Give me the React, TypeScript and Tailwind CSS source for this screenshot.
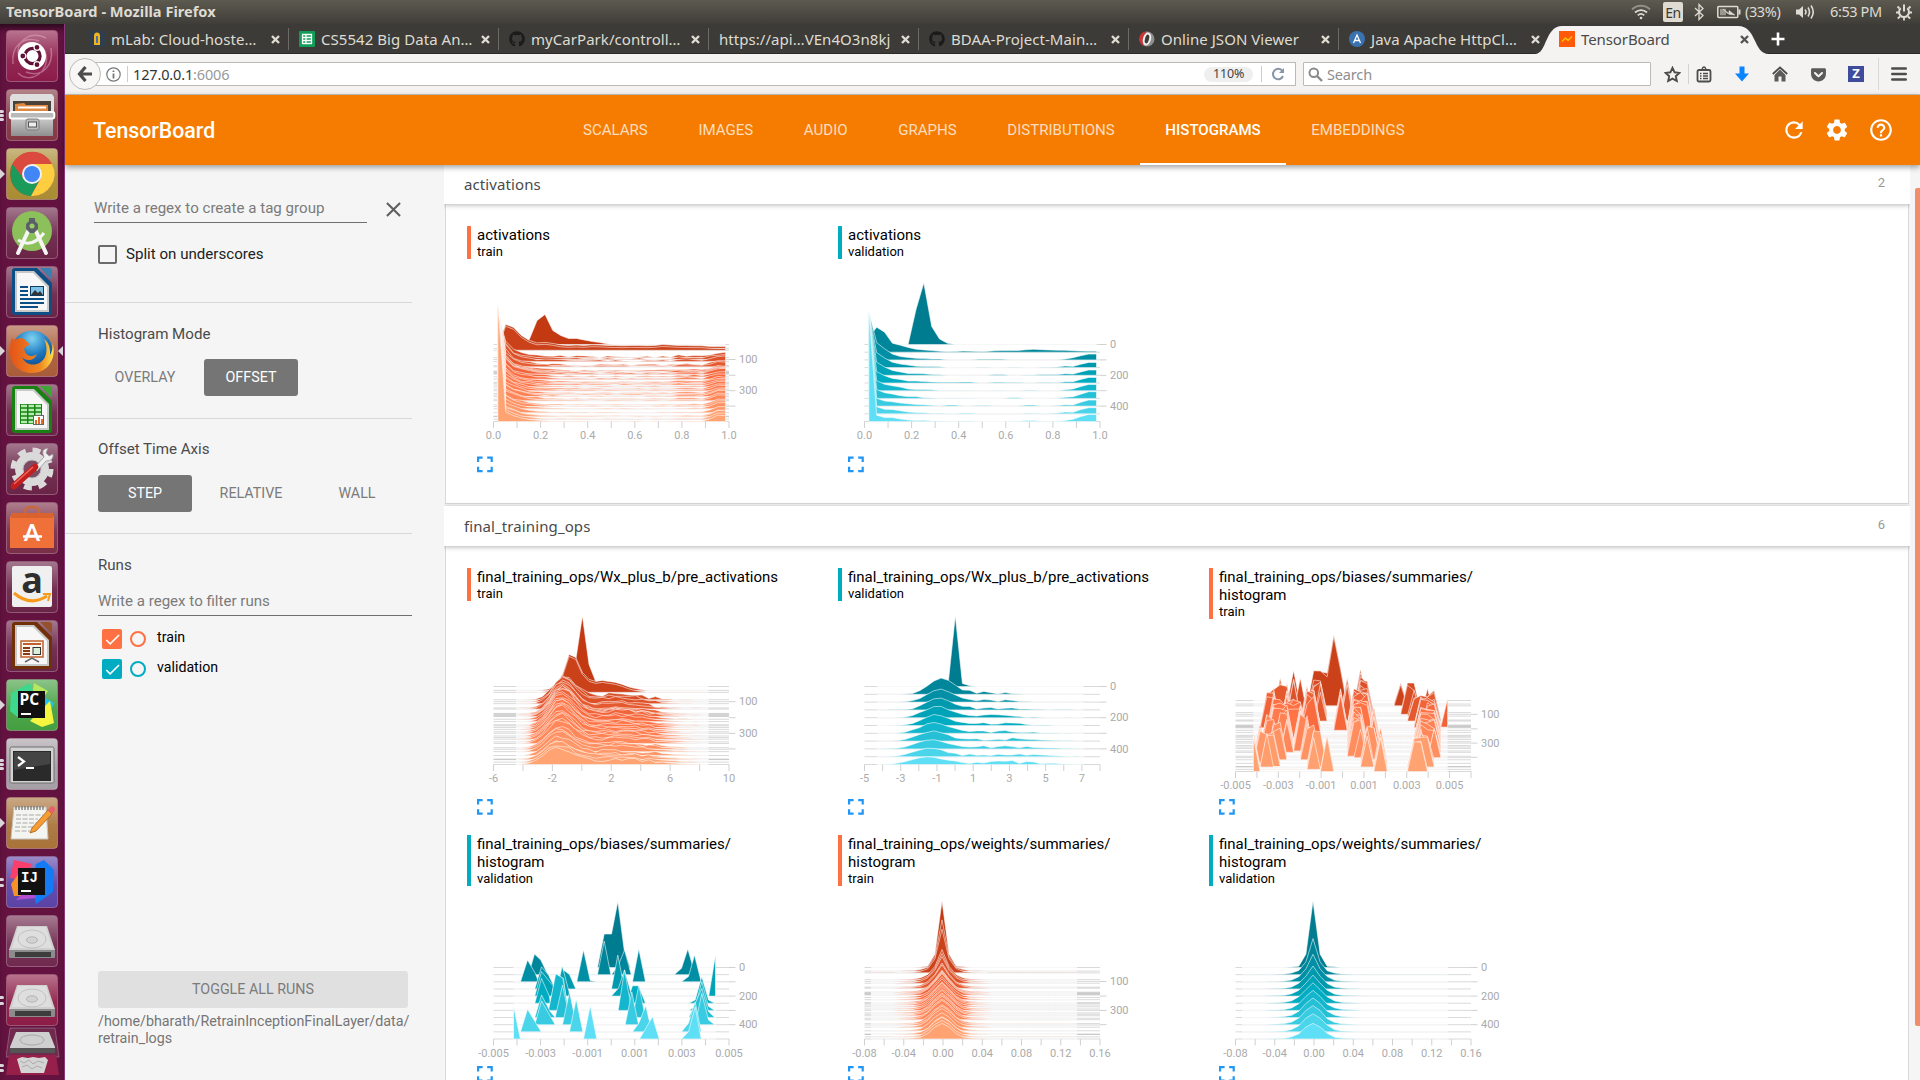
import React from "react";
import { MdRefresh, MdSettings, MdHelpOutline, MdClose, MdCheck } from "react-icons/md";
import { FaGithub, FaGetPocket } from "react-icons/fa";

const UBUNTU = "font-['Noto_Sans',sans-serif]";

/* ---------- chart helpers ---------- */

type Pt = [number, number];
type Ridge = { t: number; pts: Pt[] };

const LEFT = 26.5;
const WIDTH = 235.5;

const TRAIN_STEPS = [
  0, 0.05, 0.075, 0.17, 0.195, 0.22, 0.275, 0.29, 0.345, 0.355, 0.365, 0.375, 0.385, 0.42, 0.45, 0.49, 0.505, 0.525, 0.55,
  0.58, 0.6, 0.635, 0.655, 0.675, 0.71, 0.73, 0.785, 0.805, 0.835, 0.885, 0.93, 0.937, 0.97, 1,
];
const VAL_STEPS = [0, 0.1, 0.2, 0.3, 0.4, 0.5, 0.6, 0.7, 0.8, 0.9, 1];

const TRAIN_RAMP = [
  [194, 57, 18],
  [255, 112, 67],
  [255, 163, 115],
];
const VAL_RAMP = [
  [0, 124, 145],
  [0, 172, 193],
  [94, 223, 246],
];

function ramp(stops: number[][], t: number) {
  const k = t < 0.5 ? 0 : 1;
  const f = (t - k * 0.5) * 2;
  const c = stops[k].map((v, i) => Math.round(v + (stops[k + 1][i] - v) * f));
  return `rgb(${c[0]},${c[1]},${c[2]})`;
}

function noise(a: number, b: number) {
  const s = Math.sin(a * 127.1 + b * 311.7) * 43758.5453;
  return s - Math.floor(s);
}

function lerpTable(table: Pt[], t: number) {
  if (t <= table[0][0]) return table[0][1];
  for (let i = 1; i < table.length; i++) {
    if (t <= table[i][0]) {
      const [a, va] = table[i - 1];
      const [b, vb] = table[i];
      return va + ((vb - va) * (t - a)) / (b - a);
    }
  }
  return table[table.length - 1][1];
}

function bins(lo: number, hi: number, heights: number[]): Pt[] {
  return heights.map((h, i) => [lo + ((hi - lo) * i) / (heights.length - 1), Math.max(0, h)] as Pt);
}

const range30 = Array.from({ length: 30 }, (_, i) => i);
const gauss = (x: number, c: number, s: number) => Math.exp(-((x - c) * (x - c)) / (2 * s * s));

const activationsTrain: Ridge[] = TRAIN_STEPS.map((t, r) => {
  let h: number[];
  if (r === 0) {
    h = range30.map((i) => [0, 0, 0, 0, 5, 24, 30, 14, 9, 6, 6, 4.5, 3, 2, 0.6][i] ?? 0);
  } else if (r < 3) {
    h = range30.map((i) => [3, 24, 21, 13, 8, 5.5, 6, 5, 3.5, 3, 3.3, 3, 3.6, 3.4, 3, 2.8, 2.6, 3, 2.8, 2.6, 3, 3.8, 3.4, 3, 2.8, 2.6, 2.6, 2][i] ?? 1.8);
  } else {
    const first = lerpTable([[0.17, 42], [0.4, 74], [0.7, 94], [1, 117]], t);
    h = range30.map((i) => {
      if (i === 0) return first;
      if (i === 1) return 17 - 10 * t + noise(r, 4) * 3;
      const tail = 8 * Math.exp(-(i - 1.5) / (2.6 - t));
      const mid = 1.9 * (1 - t * 0.75) * noise(r, i);
      const edge = i > 25 ? (i === 26 ? 0.4 : i === 27 ? 2.2 : 3.6 + 2.4 * t) : i > 22 ? 1.1 * (1 - t) + 0.3 : 0;
      return tail * (0.8 + 0.4 * noise(i, r)) + mid + edge;
    });
  }
  return { t, pts: bins(30.9, 258.5, h) };
});

const activationsVal: Ridge[] = VAL_STEPS.map((t, r) => {
  let h: number[];
  if (r === 0) h = range30.map((i) => [0, 0, 0, 0, 0, 0, 35, 61.5, 18, 5.5, 1.2][i] ?? 0);
  else if (r === 1)
    h = range30.map((i) => [15, 25, 20, 9, 7, 4.8, 3, 2.3, 1.6, 1, 0.5, 0.6, 1.2, 1, 0.6, 0.8, 1.4, 1.6, 1.6, 1.8, 2.4, 2.9, 2.5, 2.2, 2, 1.9, 1.5, 1.1][i] ?? 1);
  else {
    const first = lerpTable([[0.2, 48], [0.5, 72], [1, 110]], t);
    h = range30.map((i) => {
      if (i === 0) return first;
      if (i === 1) return 21 * Math.exp(-t * 1.6) + 2;
      if (i === 2) return 13 * Math.exp(-t * 1.8) + 2;
      if (i < 9) return Math.max(0, (5.8 - t * 2) * Math.exp(-(i - 3) / 2.4) + noise(r, i) * 0.9 - 0.3);
      const edge = i === 25 ? 0.9 : i === 26 ? 1.2 : i === 27 ? 3 + t : i > 27 ? 4.7 + 1.6 * t : 0;
      return Math.max(0, noise(r * 3, Math.floor(i / 2)) * 1.6 - 0.5) + edge;
    });
  }
  return { t, pts: bins(30.9, 258.5, h) };
});

const preActTrain: Ridge[] = TRAIN_STEPS.map((t, r) => {
  let h: number[];
  if (r === 0) h = range30.map((i) => [0, 0, 0, 0, 0, 0, 0, 0, 3, 26, 70.5, 22, 5, 1.5][i] ?? 0);
  else if (r < 3)
    h = range30.map((i) => [0, 0, 0, 0, 0.4, 1.5, 6, 16, 36, 33, 18, 11, 9, 10, 9, 8, 6, 3.5, 1.8, 0.7][i] ?? 0);
  else {
    const peak = lerpTable([[0.17, 23], [0.3, 28], [0.6, 27], [0.8, 20], [1, 16]], t);
    const c = 7.3 - t * 1.1;
    h = range30.map((i) => {
      if (i === 0 || i > 27) return 0;
      const main = peak * gauss(i, c, i < c ? 1.5 + 0.4 * t : 1.9 + 0.3 * t);
      const side = (6.6 - t * 1.6) * gauss(i, 15.6, 3 + 2 * t);
      const n = (noise(r, i) - 0.5) * (i > 4 && i < 22 ? 3 : 0.4);
      return main + side + n;
    });
  }
  return { t, pts: bins(49, 241.5, h) };
});

const preActVal: Ridge[] = VAL_STEPS.map((t, r) => {
  let h: number[];
  if (r === 0) h = range30.map((i) => [0, 0, 0, 0, 0, 0, 0, 0, 0, 0, 3, 70.5, 3, 0.8][i] ?? 0);
  else {
    const peak = lerpTable([[0.1, 15.5], [0.2, 12.5], [0.4, 11], [0.6, 10], [1, 8]], t);
    const c = 9.2 - t * 2;
    h = range30.map((i) => {
      if (i === 0 || i === 29) return 0;
      const main = peak * gauss(i, c, i < c ? 1.6 + t * 0.6 : 1.8 + 0.4 * t);
      const side = 2.6 * gauss(i, 14.5 + 4 * t, 2.2 + t * 3.2) * (0.4 + noise(r, i * 2));
      return main + side + (noise(i, r) - 0.5) * (i > 4 && i < 20 ? 1.1 : 0.3);
    });
  }
  return { t, pts: bins(39, 245.5, h) };
});

const BIAS_TRACKS: Pt[][] = [
  [[0.05, 6], [0.35, 2], [0.5, 3.2], [1, 0]],
  [[0.17, 7], [0.35, 3], [0.6, 4], [0.95, 2]],
  [[0.05, 10], [0.25, 5], [0.7, 5], [0.93, 3]],
  [[0, 11], [0.3, 8], [0.6, 7], [0.98, 9]],
  [[0, 12], [0.2, 10], [0.45, 9]],
  [[0.45, 6], [0.8, 8], [1, 11]],
  [[0.05, 13], [0.2, 14], [0.43, 13]],
  [[0.17, 14], [0.5, 15], [0.8, 15]],
  [[0.05, 16], [0.4, 16], [0.7, 16], [0.95, 17]],
  [[0.17, 17], [0.5, 17.4], [1, 19]],
  [[0.05, 22], [0.2, 23.4], [0.4, 25.6], [0.8, 25], [1, 24]],
  [[0.17, 24], [0.4, 25.6], [1, 24.6]],
  [[0.2, 26], [0.5, 25.6], [0.8, 26.6], [0.95, 26]],
  [[0.27, 27], [0.5, 27.4], [0.8, 27]],
  [[0.3, 28], [0.38, 29]],
];

const biasTrain: Ridge[] = TRAIN_STEPS.map((t, r) => {
  const h = range30.map(() => 0);
  if (r === 0) {
    h[12] = 50;
  } else {
    BIAS_TRACKS.forEach((track, k) => {
      if (t < track[0][0] - 0.001 || t > track[track.length - 1][0] + 0.001) return;
      const b = Math.round(lerpTable(track, t));
      const v = (k > 9 ? 21 : 28) + noise(r, k) * 9;
      h[b] = Math.max(h[b], v);
    });
    if (r < 3) {
      h[12] = 69;
      h[13] = 36;
      h[22] = 21;
    }
  }
  return { t, pts: bins(44.4, 238.6, h) };
});

/* Each ridge lists [x, height] pairs in thirds of a pixel. */
const BIAS_VAL: Pt[][] = [
  [[312, 0], [332, 96], [354, 96], [373, 193], [392, 48], [410, 0]],
  [[105, 0], [123, 57], [142, 39], [163, 0], [312, 0], [332, 96], [352, 0], [354, 0], [373, 24], [393, 69], [413, 0], [543, 0], [564, 19], [583, 72], [605, 0]],
  [[81, 0], [102, 61], [125, 26], [135, 0], [250, 0], [270, 91], [290, 4], [310, 0], [417, 0], [436, 94], [456, 0], [564, 0], [585, 16], [603, 76], [623, 0]],
  [[124, 0], [144, 62], [165, 37], [185, 0], [195, 0], [210, 52], [228, 39], [247, 0], [354, 0], [373, 97], [393, 0]],
  [[124, 0], [144, 69], [180, 29], [184, 0], [187, 0], [206, 86], [230, 0], [354, 0], [375, 24], [393, 74], [415, 0], [646, 0], [666, 119], [666, 0]],
  [[124, 0], [144, 70], [168, 20], [170, 0], [187, 83], [210, 70], [220, 0], [400, 0], [417, 48], [435, 48], [456, 0], [586, 0], [605, 10], [625, 75], [645, 10], [664, 0]],
  [[165, 0], [187, 105], [208, 92], [225, 0], [374, 0], [393, 117], [415, 0], [586, 0], [605, 12], [625, 82], [645, 12], [664, 0]],
  [[124, 0], [144, 63], [170, 18], [185, 0], [207, 93], [228, 0], [417, 0], [436, 93], [456, 0], [586, 0], [625, 83], [645, 18], [664, 0]],
  [[124, 0], [144, 67], [185, 0], [207, 0], [228, 94], [248, 0], [395, 0], [415, 94], [435, 0], [605, 0], [625, 89], [645, 14], [664, 0]],
  [[81, 0], [102, 63], [143, 0], [228, 0], [248, 94], [268, 0], [417, 0], [436, 26], [457, 74], [475, 0], [564, 0], [585, 26], [605, 86], [623, 0]],
  [[60, 0], [60, 95], [80, 2], [102, 0], [270, 0], [290, 95], [310, 0], [438, 0], [477, 62], [497, 0], [564, 0], [585, 22], [605, 92], [623, 0]],
];
const biasVal: Ridge[] = VAL_STEPS.map((t, r) => ({
  t,
  pts: [[46.5, 0] as Pt, ...BIAS_VAL[r].map(([x, h]) => [LEFT + x / 3, h > 30 ? h / 3 + 1.5 : h / 3] as Pt), [248.7, 0] as Pt],
}));

const PEAKS: Pt[] = [[0, 66.5], [0.1, 36], [0.2, 27.5], [0.3, 23], [0.4, 21], [0.6, 20], [0.8, 19], [0.9, 18], [1, 15.6]];
function weightRidges(steps: number[]): Ridge[] {
  return steps.map((t, r) => {
    const p = lerpTable(PEAKS, t);
    const e = 1 - Math.exp(-t * 3);
    const ratio = [1, 0.2 + 0.6 * e, 0.02 + 0.36 * e, 0.01 + 0.13 * e, 0.06 * e, 0.035 * e, 0.02 * e];
    const h = range30.map((i) => {
      const d = Math.abs(i - 10);
      const v = d < 7 ? p * ratio[d] : 0;
      const jitter = d > 1 ? 1 + (noise(r, i) - 0.5) * 0.2 : 1;
      return v * jitter;
    });
    return { t, pts: bins(33, 239, h) };
  });
}
const weightsTrain = weightRidges(TRAIN_STEPS);
const weightsVal = weightRidges(VAL_STEPS);

type ChartProps = {
  run: "train" | "validation";
  ridges: Ridge[];
  top: number;
  base: [number, number];
  height: number;
  ticks: number;
  labels: [number, string][];
  iconY: number;
};

function Chart({ run, ridges, top, base, height, ticks, labels, iconY }: ChartProps) {
  const [b0, b1] = base;
  const stops = run === "train" ? TRAIN_RAMP : VAL_RAMP;
  const y = (t: number) => b0 + (b1 - b0) * t;
  const right = LEFT + WIDTH;
  const marks = run === "train" ? [0.195, 0.4, 0.6, 0.8] : [0, 0.2, 0.4, 0.6, 0.8];
  const markText = run === "train" ? ["100", "", "300", ""] : ["0", "", "200", "", "400"];
  return (
    <svg
      className="block shrink-0 font-['Roboto',sans-serif]"
      width={371}
      height={height}
      viewBox={`0 ${top} 371 ${height}`}
      fontSize={11}
      fill="#aaaaaa"
    >
      <g stroke="#000" strokeWidth={1}>
        {ridges.map((r, i) => (
          <line key={i} x1={LEFT} x2={right} y1={y(r.t)} y2={y(r.t)} strokeOpacity={0.15} />
        ))}
      </g>
      {ridges.map((r, i) => (
        <path
          key={i}
          d={
            `M${r.pts[0][0]},${y(r.t)}` +
            r.pts.map(([x, h]) => `L${x.toFixed(1)},${(y(r.t) - h).toFixed(1)}`).join("") +
            `L${r.pts[r.pts.length - 1][0]},${y(r.t)}Z`
          }
          fill={ramp(stops, r.t)}
          stroke="#fff"
          strokeWidth={1}
          strokeOpacity={0.55}
        />
      ))}
      <g stroke="#d0d0d0" strokeWidth={1}>
        {Array.from({ length: ticks + 1 }, (_, i) => (
          <line key={i} x1={LEFT + (WIDTH * i) / ticks} x2={LEFT + (WIDTH * i) / ticks} y1={b1} y2={b1 + 6.5} />
        ))}
        {marks.map((m) => (
          <line key={m} x1={right} x2={right + 6.5} y1={y(m)} y2={y(m)} />
        ))}
      </g>
      {labels.map(([pos, text]) => (
        <text key={text} x={LEFT + WIDTH * pos} y={b1 + 17.5} textAnchor="middle">
          {text}
        </text>
      ))}
      {marks.map((m, i) => (
        <text key={m} x={right + 10} y={y(m) + 3.7}>
          {markText[i]}
        </text>
      ))}
      <g transform={`translate(10 ${iconY})`} fill="none" stroke="#2196f3" strokeWidth={2.2}>
        <path d="M1.1,5.6V1.1H5.6M10.2,1.1H14.7V5.6M14.7,10.2V14.7H10.2M5.6,14.7H1.1V10.2" />
      </g>
    </svg>
  );
}

function Card({ title, ...chart }: ChartProps & { title: string[] }) {
  const bar = chart.run === "train" ? "border-[#ff7043]" : "border-[#00acc1]";
  return (
    <div className="flex w-[371px] shrink-0 flex-col">
      <div className={`shrink-0 border-l-4 pl-1.5 text-black ${bar}`}>
        {title.map((line) => (
          <div key={line} className="h-[18px] whitespace-nowrap text-[15px] leading-[18px]">
            {line}
          </div>
        ))}
        <div className="h-[15px] text-[13px] leading-[15px]">{chart.run}</div>
      </div>
      <Chart {...chart} />
    </div>
  );
}

/* ---------- desktop top bar ---------- */

function TitleBar() {
  return (
    <div className={`flex h-6 shrink-0 items-center justify-between bg-linear-to-b from-[#5d5b50] to-[#3f3d38] pl-1.5 text-[#dfdbd2] ${UBUNTU}`}>
      <span className="text-[14.600px] font-bold">TensorBoard - Mozilla Firefox</span>
      <div className="flex items-center text-[14.5px] tracking-[-0.4px]">
        <svg className="mr-3" width="20" height="18" viewBox="0 0 20 18" fill="none" stroke="#dfdbd2" strokeWidth="1.8">
          <path d="M1,6.5C6,1.5 14,1.5 19,6.5" strokeOpacity=".45" />
          <path d="M4,9.5C7.500,6.200 12.500,6.200 16,9.500" />
          <path d="M6.800,12.300C8.700,10.600 11.300,10.600 13.200,12.300" />
          <circle cx="10" cy="15" r="1.3" fill="#dfdbd2" stroke="none" />
        </svg>
        <span className="mr-[10px] flex h-5 w-5 items-center justify-center rounded-[2px] bg-[#dfdbd2] text-[14px] text-[#3c3b37]">En</span>
        <svg className="mr-3" width="12" height="18" viewBox="0 0 12 18" fill="none" stroke="#dfdbd2" strokeWidth="1.3">
          <path d="M2,5L10,12.500L6,16.500V1.500L10,5.500L2,13" />
        </svg>
        <svg className="mr-1" width="24" height="14" viewBox="0 0 24 14" fill="none" stroke="#dfdbd2">
          <rect x=".8" y="1.500" width="20" height="11" rx="1" strokeWidth="1.500" />
          <path d="M22.500,4.500V9.500" strokeWidth="2" />
          <rect x="3" y="3.800" width="6" height="6.500" fill="#9b978d" stroke="none" />
          <path d="M6,4L12,8.500V5.500L18,10L12.500,9.500L10,8Z" fill="#dfdbd2" strokeWidth=".5" />
        </svg>
        <span className="w-[50px]">(33%)</span>
        <svg className="mr-[14px]" width="21" height="16" viewBox="0 0 21 16" fill="none" stroke="#dfdbd2" strokeWidth="1.600">
          <path d="M1,5.500H4L8,2V14L4,10.500H1Z" fill="#dfdbd2" stroke="none" />
          <path d="M10,5.500Q12,8 10,10.500M13,3.500Q16,8 13,12.500M16,1.500Q20.500,8 16,14.500" />
        </svg>
        <span className="w-[66px]">6:53 PM</span>
        <svg className="mr-2" width="16" height="18" viewBox="0 0 16 18" fill="none" stroke="#dfdbd2" strokeWidth="2">
          <path d="M4.800,5.200A5,5 0 1 0 11.200,5.200M8,1.500V8.500" />
          <path d="M1.500,3.500L3.500,5.500M14.500,3.500L12.500,5.500M0,9.500H3M13,9.500H16M1.800,15.500L4,13.500M14.200,15.500L12,13.500M8,14.500V17.500" strokeWidth="1.800" />
        </svg>
      </div>
    </div>
  );
}

/* ---------- launcher ---------- */

function Tile({ bg, pips, active, children }: { bg: string; pips?: number; active?: boolean; children: React.ReactNode }) {
  return (
    <div className="relative h-[59px] w-[65px] shrink-0 pl-1.5">
      {pips === 1 && <span className="absolute left-0 top-[21px] h-0 w-0 border-y-[5px] border-l-[5px] border-y-transparent border-l-[#d9d5d8]" />}
      {pips !== undefined && pips > 1 && (
        <span className="absolute left-0 top-[20px] flex h-3 flex-col justify-around">
          {Array.from({ length: pips }, (_, i) => (
            <span key={i} className="h-[3px] w-1 rounded-r-sm bg-[#d9d5d8]" />
          ))}
        </span>
      )}
      {active && <span className="absolute right-0.5 top-[21px] h-0 w-0 border-y-[5px] border-r-[5px] border-y-transparent border-r-[#d9d5d8]" />}
      <svg className="overflow-visible" width="52" height="52" viewBox="0 0 52 52">
        <rect x=".5" y=".5" width="51" height="51" rx="3.500" fill={bg} stroke="#fff" strokeOpacity=".28" />
        <rect x="1" y="1" width="50" height="50" rx="3" fill="url(#gloss)" />
        {children}
      </svg>
    </div>
  );
}

function OfficeDoc({ c, light, children }: { c: string; light: string; children: React.ReactNode }) {
  return (
    <>
      <path d="M6,5Q6,2 9,2H31L46,17V46Q46,49 43,49H9Q6,49 6,46Z" fill={c} />
      <path d="M34,2H43Q46,2 46,5V14Z" fill={light} />
      <path d="M9,5H28L43,20V46H9Z" fill="#c9c9c9" />
      <path d="M11,7H27L41,21V44H11Z" fill="#f7f7f7" />
      {children}
    </>
  );
}

function Disk() {
  return (
    <>
      <path d="M11,11H41L49,35V42H3V35Z" fill="#cfcfcf" />
      <path d="M3,35H49V42Q49,43 48,43H4Q3,43 3,42Z" fill="#8c8c8c" />
      <path d="M9,37H45V42H9Z" fill="#3d3d3d" />
      <path d="M12,12H40L46,33H6Z" fill="#dedede" />
      <ellipse cx="26" cy="24" rx="14" ry="9" fill="none" stroke="#c2c2c2" />
      <ellipse cx="26" cy="25" rx="5.500" ry="3.200" fill="#d2d2d2" stroke="#aaa" strokeWidth=".8" />
    </>
  );
}

function Launcher() {
  return (
    <div className="flex w-[65px] shrink-0 flex-col overflow-hidden border-r border-[#8a3a7c] bg-[#641340] pt-1.5 shadow-[inset_0_7px_6px_-3px_#2a0a1c]">
      <svg width="0" height="0" className="absolute">
        <defs>
          <linearGradient id="gloss" x1="0" y1="0" x2="0" y2="1">
            <stop offset="0" stopColor="#fff" stopOpacity=".38" />
            <stop offset=".55" stopColor="#fff" stopOpacity=".06" />
            <stop offset="1" stopColor="#fff" stopOpacity="0" />
          </linearGradient>
          <linearGradient id="metal" x1="0" y1="0" x2="0" y2="1">
            <stop offset="0" stopColor="#d8d8d8" />
            <stop offset="1" stopColor="#8f8f8f" />
          </linearGradient>
          <radialGradient id="globe" cx=".5" cy=".2" r=".8">
            <stop offset="0" stopColor="#7fd3f2" />
            <stop offset=".5" stopColor="#1b79bf" />
            <stop offset="1" stopColor="#12387c" />
          </radialGradient>
          <linearGradient id="fox" x1="0" y1="0" x2="1" y2="0">
            <stop offset="0" stopColor="#e3541a" />
            <stop offset=".7" stopColor="#f08a22" />
            <stop offset="1" stopColor="#fbe04a" />
          </linearGradient>
        </defs>
      </svg>
      <Tile bg="#8c1c49">
        <path d="M7,34C5,15 18,6 33,11M45,18C48,36 36,48 20,42M12,43C24,55 44,42 40,24M40,8C26,0 8,10 13,28" fill="none" stroke="#e7b6cb" strokeOpacity=".45" strokeWidth="1.500" />
        <circle cx="26" cy="26" r="14" fill="#fff" />
        <circle cx="26.500" cy="26" r="7.600" fill="none" stroke="#5f1236" strokeWidth="3.200" />
        <g fill="#5f1236" stroke="#fff" strokeWidth="1.200">
          <circle cx="16.800" cy="26" r="3" />
          <circle cx="31" cy="17.300" r="3" />
          <circle cx="31" cy="34.700" r="3" />
        </g>
      </Tile>
      <Tile bg="#843843" pips={3}>
        <path d="M6,5H46L48,8V25H4V8Z" fill="#dedede" />
        <rect x="7" y="12" width="38" height="13" fill="#4a4238" />
        <path d="M9,15L18,14L20,16H42V24H9Z" fill="#e08740" />
        <rect x="12" y="17.500" width="28" height="2" fill="#fff" />
        <rect x="5" y="25" width="42" height="22" fill="url(#metal)" />
        <rect x="3.800" y="23" width="44.500" height="6.500" rx="2" fill="#b9b9b9" stroke="#fff" strokeWidth="2" />
        <rect x="20" y="30" width="13" height="11" rx="2" fill="#bdbdbd" stroke="#7d7d7d" />
        <rect x="22.500" y="33" width="8" height="5" fill="#eee" stroke="#555" />
      </Tile>
      <Tile bg="#a98c33" pips={1}>
        <circle cx="26" cy="26" r="22" fill="#db4437" />
        <path d="M26,26L8,14A22,22 0 0 0 25,48L34,31Z" fill="#1a9b59" />
        <path d="M26,16H46A22,22 0 0 1 25,48L35,30Z" fill="#ffcd40" />
        <path d="M26,16H46A22,22 0 0 0 6.500,16L17,30Z" fill="#db4a3e" />
        <circle cx="26" cy="26" r="10" fill="#f1f1f1" />
        <circle cx="26" cy="26" r="8" fill="#4285f4" />
      </Tile>
      <Tile bg="#6a2447">
        <circle cx="26" cy="24" r="20" fill="#8bc05a" />
        <path d="M24,20L12,46M28,20L40,46" stroke="#f5f5f5" strokeWidth="4" strokeLinecap="round" />
        <path d="M12,33Q26,42 38,26" fill="none" stroke="#f5f5f5" strokeWidth="3" />
        <path d="M23,11H29V14L32,17V22L28,26H24L20,22V17L23,14Z" fill="#5b6166" />
        <circle cx="26" cy="19" r="2.500" fill="#9ccc65" />
      </Tile>
      <Tile bg="#6a2447">
        <OfficeDoc c="#0d4f85" light="#3b7fb0">
          <path d="M14,21H22M14,25H22M14,29H22M14,33H38M14,37H38M14,41H32" stroke="#0d4f85" strokeWidth="2" />
          <rect x="24.500" y="20.500" width="13" height="9" fill="#7ec2e8" stroke="#0d3f66" />
          <path d="M25,29L29,24L32,27L34,25L37,29Z" fill="#333" />
        </OfficeDoc>
      </Tile>
      <Tile bg="#a95c3a" pips={1} active>
        <circle cx="26" cy="26" r="20.500" fill="url(#globe)" />
        <path d="M6,13C8,16 9,14 15,13C20,14 20,17 24,19C20,22 19,22 18,24C20,31 25,33 31,29C28,37 19,36 16,32C20,42 34,42 39,32C42,25 40,18 38,14C45,19 44,28 44,30C46,27 47,22 46.500,18C51,32 43,48 26,48C12,48 3,38 4,24C4,20 5,16 6,13Z" fill="url(#fox)" />
      </Tile>
      <Tile bg="#6a2447">
        <OfficeDoc c="#178212" light="#3ca637">
          <rect x="14" y="20" width="22" height="20" fill="#178212" />
          <path d="M15,22H21M22.500,22H28M29.500,22H35M15,26H21M22.500,26H28M29.500,26H35M15,30H21M22.500,30H28M29.500,30H35M15,34H21M22.500,34H28M15,38H21M22.500,38H28" stroke="#b4edaf" strokeWidth="2.600" />
          <rect x="27.500" y="31.500" width="10" height="9" fill="#fff" stroke="#666" />
          <path d="M30,40V36M33,40V33M36,40V35" stroke="#e4682a" strokeWidth="2" />
        </OfficeDoc>
      </Tile>
      <Tile bg="#6a2447">
        <circle cx="26" cy="26" r="17" fill="#dadada" />
        <circle cx="26" cy="26" r="19" fill="none" stroke="#dadada" strokeWidth="5" strokeDasharray="8 6.920" />
        <circle cx="26" cy="26" r="9" fill="#7c4a63" stroke="#bbb" />
        <path d="M28,25L38,14Q34,6 42,5L40,10L43,13L47,11Q48,18 40,18L31,28Z" fill="#eee" stroke="#999" strokeWidth=".8" />
        <path d="M8,43L29,24" stroke="#c41f1f" strokeWidth="6.500" strokeLinecap="round" />
        <path d="M8,41L27,24" stroke="#ea6a5e" strokeWidth="1.500" />
      </Tile>
      <Tile bg="#7a2e48">
        <path d="M19,13V8Q20,5 26,5Q32,5 33,8V13" fill="none" stroke="#c8683c" strokeWidth="2.500" />
        <path d="M7,11H45L48,15V46H4V15Z" fill="#f0703a" />
        <path d="M5,11H47V16H5Z" fill="#d9622f" />
        <text x="26" y="39" textAnchor="middle" fontSize="23" fontWeight="700" fill="#fff" fontFamily="Lato, sans-serif">A</text>
        <path d="M17,34.500H36" stroke="#fff" strokeWidth="2.500" />
      </Tile>
      <Tile bg="#6a2447">
        <rect x="6" y="5" width="40" height="41" rx="2" fill="#f0f0f0" />
        <text x="26" y="32" textAnchor="middle" fontSize="36" fontWeight="700" fill="#2e2e2e" fontFamily="Open Sans, sans-serif">a</text>
        <path d="M8,32Q24,46 41,35" fill="none" stroke="#f79a1c" strokeWidth="3" />
        <path d="M37,33L44,33L42,40" fill="none" stroke="#f79a1c" strokeWidth="2" />
      </Tile>
      <Tile bg="#6a2447">
        <OfficeDoc c="#713108" light="#95522a">
          <rect x="15" y="21" width="22" height="16" fill="#fdf5ef" stroke="#c0602c" strokeWidth="1.500" />
          <path d="M17,24H35" stroke="#c0602c" strokeWidth="2" />
          <path d="M17,28H24M17,31H24M17,34H24" stroke="#8c3c12" strokeWidth="1.800" />
          <rect x="27" y="27.500" width="7.500" height="7" fill="#d9f0d8" stroke="#333" />
          <path d="M19,42L26,38L33,42" fill="none" stroke="#666" strokeWidth="1.500" />
        </OfficeDoc>
      </Tile>
      <Tile bg="#459f41" pips={1}>
        <path d="M5,14L24,4L30,20L14,40L4,32Z" fill="#3fd68d" />
        <path d="M28,4L42,12L34,24L26,16Z" fill="#b5e85e" />
        <path d="M38,18L48,24L42,40L32,30Z" fill="#1ec4e8" />
        <path d="M24,42L44,22L48,44L36,48Z" fill="#f3f53e" />
        <rect x="12" y="12" width="27" height="27" fill="#111" />
        <text x="13.500" y="26" fontSize="15.500" fontWeight="700" fill="#fff" fontFamily="Open Sans, sans-serif">PC</text>
        <rect x="15" y="34" width="10" height="2" fill="#fff" />
      </Tile>
      <Tile bg="#a79fa6" pips={3}>
        <rect x="4" y="9" width="44" height="36" rx="1.500" fill="#d2d2d2" stroke="#6d6d6d" />
        <rect x="7" y="13" width="38" height="30" fill="#2a2a2a" />
        <path d="M8,14H44V26L8,32Z" fill="#444" />
        <path d="M12,19L18,23.500L12,28" fill="none" stroke="#fff" strokeWidth="2.200" />
        <path d="M20,30H28" stroke="#fff" strokeWidth="2" />
      </Tile>
      <Tile bg="#a9733a" pips={1}>
        <path d="M8,10H40L42,42H5Z" fill="#f4f4f0" stroke="#c8c4ba" />
        <path d="M10,9V13M13,9V13M16,9V13M19,9V13M22,9V13M25,9V13M28,9V13M31,9V13M34,9V13M37,9V13" stroke="#555" />
        <path d="M10,18H37M10,22H32M10,26H34M9,30H27M9,34H24" stroke="#a9a9a9" strokeDasharray="5 1.500" />
        <path d="M26,31L42,13L46,17L30,34L24,36Z" fill="#f59d33" stroke="#a8601a" strokeWidth=".8" />
        <path d="M42,13L44.500,10Q47,8 49,11Q50,13 46,17Z" fill="#e5606a" />
      </Tile>
      <Tile bg="#5b43a6" pips={2}>
        <path d="M8,4L26,8L18,24L4,22Z" fill="#fb3f6c" />
        <path d="M5,28L14,16L18,40L8,40Z" fill="#f79229" />
        <path d="M30,8L38,4L48,14L47,36L30,48L26,30Z" fill="#147bf5" />
        <path d="M10,44L24,30L30,42Z" fill="#b14dd0" />
        <rect x="12" y="12" width="27" height="27" fill="#111" />
        <text x="15" y="26" fontSize="14" fontWeight="700" fill="#fff" fontFamily="Liberation Mono, monospace">IJ</text>
        <rect x="15" y="34" width="10" height="2" fill="#fff" />
      </Tile>
      <Tile bg="#6f2a4e"><Disk /></Tile>
      <Tile bg="#8c1c45" pips={2}><Disk /></Tile>
      <div className="relative -mt-1.5 h-[53px] shrink-0 pl-1.5">
        <span className="absolute left-0 top-[36px] flex h-2.5 flex-col justify-around">
          <span className="h-[3px] w-1 rounded-r-sm bg-[#d9d5d8]" />
          <span className="h-[3px] w-1 rounded-r-sm bg-[#d9d5d8]" />
        </span>
        <svg width="54" height="50" viewBox="0 0 54 50">
          <path d="M4,1H49L53,30H0Z" fill="#6f2a4e" stroke="#fff" strokeOpacity=".25" />
          <path d="M10,5H43L49,20V26H4V20Z" fill="#cfcfcf" />
          <path d="M4,21H49V26H4Z" fill="#555" />
          <ellipse cx="26" cy="13" rx="12" ry="5" fill="none" stroke="#aaa" />
          <path d="M3,28H50L53,48H0Z" fill="#96204a" />
          <path d="M11,32L16,30L22,31L27,30L33,31L39,30L42,33L38,46H15Z" fill="#d4d4d4" />
          <path d="M14,34L18,36L23,33L27,37L32,34L38,36M16,40L21,38L26,42L31,39L36,41" fill="none" stroke="#a2a2a2" strokeWidth=".8" />
        </svg>
      </div>
    </div>
  );
}

/* ---------- browser chrome ---------- */

function CloseX({ c }: { c: string }) {
  return (
    <svg width="9" height="9" viewBox="0 0 9 9" stroke={c} strokeWidth="2.400" className="shrink-0">
      <path d="M1,1L8,8M8,1L1,8" />
    </svg>
  );
}

const TABS: { title: string; icon: React.ReactNode }[] = [
  {
    title: "mLab: Cloud-hoste…",
    icon: (
      <svg width="16" height="16" viewBox="0 0 16 16">
        <rect width="16" height="16" fill="#2f3d4c" />
        <path d="M5,14V5Q5,1.500 8,1.500Q11,1.500 11,5V14Z" fill="#f2b61c" />
        <path d="M8,5V12" stroke="#4a6fa5" strokeWidth="2" />
      </svg>
    ),
  },
  {
    title: "CS5542 Big Data An…",
    icon: (
      <svg width="16" height="16" viewBox="0 0 16 16">
        <rect width="16" height="16" rx="1" fill="#0f9d58" />
        <path d="M3.500,3.500H12.500V12.500H3.500ZM3.500,6.500H12.500M3.500,9.500H12.500M7,3.500V12.500" fill="none" stroke="#fff" strokeWidth="1.300" />
      </svg>
    ),
  },
  { title: "myCarPark/controll…", icon: <FaGithub size={16} color="#1b1b1b" className="shrink-0" /> },
  { title: "https://api…VEn4O3n8kj", icon: null },
  { title: "BDAA-Project-Main…", icon: <FaGithub size={16} color="#1b1b1b" className="shrink-0" /> },
  {
    title: "Online JSON Viewer",
    icon: (
      <svg width="16" height="16" viewBox="0 0 16 16">
        <circle cx="8" cy="8" r="7.500" fill="#8f8f8f" />
        <path d="M8,.5A7.500,7.500 0 0 0 5,15Q1,8 8,.5Z" fill="#c33" />
        <ellipse cx="8" cy="8" rx="3" ry="5.500" fill="#3c3b37" stroke="#eee" strokeWidth="2" transform="rotate(15 8 8)" />
      </svg>
    ),
  },
  {
    title: "Java Apache HttpCl…",
    icon: (
      <svg width="16" height="16" viewBox="0 0 16 16">
        <circle cx="8" cy="8" r="8" fill="#3a72b0" />
        <path d="M4.500,12L8,4L11.500,12M6,9.500H10" fill="none" stroke="#fff" strokeWidth="1.300" />
      </svg>
    ),
  },
];

function TabStrip() {
  return (
    <div className={`flex h-[30px] shrink-0 border-b border-[#2b2a27] bg-[#3c3b37] pl-[14px] text-[15px] tracking-[0.05px] text-[#dfdbd2] ${UBUNTU}`}>
      {TABS.map((tab, i) => (
        <div key={tab.title} className="flex w-[210px] shrink-0 items-center">
          <div className="flex w-[187px] shrink-0 items-center gap-1.5 whitespace-nowrap pl-[10px] pt-px">
            {tab.icon}
            <span>{tab.title}</span>
          </div>
          <div className="flex w-[22px] shrink-0 items-center pt-px">
            <span className="ml-[5px] flex"><CloseX c="#dfdbd2" /></span>
          </div>
          {i < 6 && <span className="h-[22px] w-px shrink-0 bg-[#6d6b66]" />}
        </div>
      ))}
      <div className="relative flex w-[220px] shrink-0 items-center pl-[10px] pt-px tracking-[-0.1px] text-[#4a4a4a]">
        <svg className="absolute -left-[14px] top-[2px]" width="240" height="28" viewBox="0 0 240 28">
          <path d="M0,28C12,28 10,0 27,0H203C222,0 218,28 234,28Z" fill="#f4f3f2" />
        </svg>
        <svg className="relative" width="16" height="16" viewBox="0 0 16 16">
          <rect width="16" height="16" fill="#ff5a0a" />
          <path d="M3,10.500L6.500,7L9,9.500L13,5.500" fill="none" stroke="#ffc400" strokeWidth="1.400" />
        </svg>
        <span className="relative ml-1.5 w-[158px]">TensorBoard</span>
        <span className="relative flex pl-[1px]"><CloseX c="#555" /></span>
      </div>
      <svg className="ml-[2px] mt-px self-center" width="14" height="14" viewBox="0 0 14 14" stroke="#fff" strokeWidth="2.600">
        <path d="M7,.5V13.500M.5,7H13.500" />
      </svg>
    </div>
  );
}

function NavBar() {
  return (
    <div className={`flex h-[41px] shrink-0 items-center border-b border-[#c9c7c4] bg-[#f4f3f2] text-[14.5px] tracking-[-0.15px] ${UBUNTU}`}>
      <div className="relative z-10 ml-1 flex h-8 w-8 shrink-0 items-center justify-center rounded-full border border-[#bdbab5] bg-[#f8f7f6]">
        <svg width="16" height="16" viewBox="0 0 16 16" fill="none" stroke="#4c4c4c" strokeWidth="3.200">
          <path d="M8.500,1L2.500,8L8.500,15M3,8H15" />
        </svg>
      </div>
      <div className="-ml-2.5 flex h-6 w-[1205px] shrink-0 items-center border border-[#bdbab5] bg-white pl-[14px]">
        <svg width="15" height="15" viewBox="0 0 15 15" fill="none" stroke="#777">
          <circle cx="7.500" cy="7.500" r="6.700" strokeWidth="1.200" />
          <path d="M7.500,6.500V11.500M7.500,3.500V5" strokeWidth="1.800" />
        </svg>
        <span className="ml-[6px] h-4 w-px bg-[#ccc]" />
        <span className="ml-[5px] pt-px text-[#333]">127.0.0.1<span className="text-[#999]">:6006</span></span>
        <span className="ml-auto flex h-[15px] w-[49px] items-center justify-center rounded-full bg-[#efefef] text-[12.5px] text-[#444]">110%</span>
        <span className="ml-2 h-4 w-px bg-[#ccc]" />
        <svg className="ml-[9px] mr-[10px]" width="14" height="14" viewBox="0 0 14 14" fill="none" stroke="#8696a8" strokeWidth="2">
          <path d="M12,9A5.200,5.200 0 1 1 11,3.500" />
          <path d="M8,6H13V1Z" fill="#8696a8" stroke="none" />
        </svg>
      </div>
      <div className="ml-[7px] flex h-6 w-[348px] shrink-0 items-center rounded-[1px] border border-[#bdbab5] bg-white pl-1 text-[#8e8e8e]">
        <svg width="15" height="15" viewBox="0 0 15 15" fill="none" stroke="#8a8a8a" strokeWidth="2">
          <circle cx="5.800" cy="5.800" r="4.300" />
          <path d="M9,9L14,14" strokeWidth="2.400" />
        </svg>
        <span className="ml-1 pt-px">Search</span>
      </div>
      <svg className="ml-[13px]" width="17" height="17" viewBox="0 0 17 17" fill="none" stroke="#4c4c4c" strokeWidth="1.900">
        <path d="M8.500,1.800L10.600,6.300L15.400,6.900L11.800,10.200L12.800,15L8.500,12.600L4.200,15L5.200,10.200L1.600,6.900L6.400,6.300Z" />
      </svg>
      <span className="ml-[7px] h-5 w-px bg-[#d5d3d0]" />
      <svg className="ml-[7px]" width="16" height="17" viewBox="0 0 16 17" fill="none" stroke="#4c4c4c" strokeWidth="1.800">
        <rect x="1.500" y="4" width="13" height="11.500" rx="1.500" />
        <path d="M6,3Q8,-1 10,3M4,7.500H5.500M7,7.500H12M4,10H5.500M7,10H12M4,12.500H5.500M7,12.500H12" strokeWidth="1.400" />
      </svg>
      <svg className="ml-[23px]" width="14" height="16" viewBox="0 0 14 16" fill="#0a84ff">
        <path d="M4.500,0.500H9.500V7.500H14L7,15.500L0,7.500H4.500Z" />
      </svg>
      <svg className="ml-[23px]" width="16" height="16" viewBox="0 0 16 16" fill="#5a5a5a">
        <path d="M8,3.500L2.500,9V15.500H6.500V10.500H9.500V15.500H13.500V9Z" />
        <path d="M.8,8L8,1.500L15.200,8" fill="none" stroke="#4c4c4c" strokeWidth="1.800" />
      </svg>
      <FaGetPocket className="ml-[22px]" size={17} color="#5a5a5a" />
      <span className="ml-[21px] flex h-4 w-4 items-center justify-center bg-[#3f4b9c] text-[13px] font-bold text-white">Z</span>
      <span className="ml-[14px] h-8 w-px bg-[#dbd9d6]" />
      <svg className="ml-3" width="16" height="14" viewBox="0 0 16 14" stroke="#4c4c4c" strokeWidth="2.600" strokeLinecap="round">
        <path d="M1.300,1.500H14.700M1.300,7H14.700M1.300,12.500H14.700" />
      </svg>
    </div>
  );
}

/* ---------- TensorBoard ---------- */

const DASHBOARDS = ["SCALARS", "IMAGES", "AUDIO", "GRAPHS", "DISTRIBUTIONS", "HISTOGRAMS", "EMBEDDINGS"];

function Toolbar() {
  return (
    <div className="relative z-20 flex h-[70px] shrink-0 items-center bg-[#f57c00] text-white shadow-[0_2px_6px_rgba(0,0,0,.4)]">
      <div className="w-[492.700px] shrink-0 pl-7 pt-px text-[21.300px] font-medium">TensorBoard</div>
      <div className="flex h-full text-[15.050px]">
        {DASHBOARDS.map((name) =>
          name === "HISTOGRAMS" ? (
            <div key={name} className="flex h-full items-center border-b-2 border-white px-[25.300px] pt-[3px] font-medium">{name}</div>
          ) : (
            <div key={name} className="flex h-full items-center px-[25.300px] pt-px text-white/75">{name}</div>
          ),
        )}
      </div>
      <div className="ml-auto mr-[26.500px] flex items-center gap-[17.500px]">
        <MdRefresh size={26} />
        <MdSettings size={26} />
        <MdHelpOutline size={26} />
      </div>
    </div>
  );
}

function Btn({ label, on }: { label: string; on?: boolean }) {
  return on ? (
    <div className="mr-3 flex h-[37px] w-[94px] shrink-0 items-center justify-center rounded-[3px] bg-[#757575] text-[14.300px] text-white">{label}</div>
  ) : (
    <div className="mr-3 flex h-[37px] w-[94px] shrink-0 items-center justify-center text-[14.300px] text-[#7b7b7b]">{label}</div>
  );
}

function Sidebar() {
  return (
    <div className="flex w-[379px] shrink-0 flex-col bg-[#f5f5f5] text-[15.100px] text-[#212121]">
      <div className="flex h-[138px] w-[347px] flex-col border-b border-[#d8d8d8] pl-[29px]">
        <div className="mt-[31px] flex items-center">
          <div className="h-[27px] w-[273px] border-b border-[#6f6f6f] leading-[24px] text-[#7b7b7b]">Write a regex to create a tag group</div>
          <MdClose size={25} color="#5f5f5f" className="-mt-px ml-[13.500px]" />
        </div>
        <div className="mt-5 flex items-center pl-1">
          <span className="h-[19px] w-[19px] rounded-[2px] border-2 border-[#6b6b6b]" />
          <span className="ml-[9px]">Split on underscores</span>
        </div>
      </div>
      <div className="flex h-[116px] w-[347px] flex-col border-b border-[#d8d8d8] pl-[33px]">
        <div className="mt-[19px] h-6 leading-6 text-[#4a4a4a]">Histogram Mode</div>
        <div className="mt-[13px] flex"><Btn label="OVERLAY" /><Btn label="OFFSET" on /></div>
      </div>
      <div className="flex h-[115px] w-[347px] flex-col border-b border-[#d8d8d8] pl-[33px]">
        <div className="mt-[18px] h-6 leading-6 text-[#4a4a4a]">Offset Time Axis</div>
        <div className="mt-[14px] flex"><Btn label="STEP" on /><Btn label="RELATIVE" /><Btn label="WALL" /></div>
      </div>
      <div className="flex w-[347px] flex-col pl-[33px]">
        <div className="mt-[19px] h-6 leading-6 text-[#4a4a4a]">Runs</div>
        <div className="mt-3 h-[27px] border-b border-[#6f6f6f] leading-6 text-[#7b7b7b]">Write a regex to filter runs</div>
        <div className="mt-[13px] flex h-5 items-center pl-1 text-[14.200px]">
          <span className="flex h-5 w-5 items-center justify-center rounded-[2px] bg-[#ff7043]"><MdCheck size={19} color="#fff" /></span>
          <span className="ml-2 h-4 w-4 rounded-full border-2 border-[#ff7043]" />
          <span className="-mt-[3px] ml-[11px] text-black">train</span>
        </div>
        <div className="mt-[10px] flex h-5 items-center pl-1 text-[14.200px]">
          <span className="flex h-5 w-5 items-center justify-center rounded-[2px] bg-[#00acc1]"><MdCheck size={19} color="#fff" /></span>
          <span className="ml-2 h-4 w-4 rounded-full border-2 border-[#00acc1]" />
          <span className="-mt-[3px] ml-[11px] text-black">validation</span>
        </div>
      </div>
      <div className="mb-[33px] mt-auto w-[347px] pl-[33px]">
        <div className="flex h-[37px] w-[310px] items-center justify-center rounded-[3px] bg-[#e0e0e0] text-[14.300px] text-[#7b7b7b]">TOGGLE ALL RUNS</div>
        <div className="mt-[5px] text-[14.300px] leading-[17px] text-[#757575]">
          /home/bharath/RetrainInceptionFinalLayer/data/
          <br />
          retrain_logs
        </div>
      </div>
    </div>
  );
}

function CategoryHeader({ name, count }: { name: string; count: number }) {
  return (
    <div className="relative z-10 flex h-10 shrink-0 items-center justify-between bg-white pl-5 pr-[25px] shadow-[0_1px_5px_rgba(0,0,0,.3)]">
      <span className={`text-[15px] tracking-[0.1px] text-[#4a4a4a] ${UBUNTU}`}>{name}</span>
      <span className="-mt-0.5 text-[13px] text-[#999]">{count}</span>
    </div>
  );
}

const UNIT: [number, string][] = [[0, "0.0"], [0.2, "0.2"], [0.4, "0.4"], [0.6, "0.6"], [0.8, "0.8"], [1, "1.0"]];
const WEIGHT: [number, string][] = [[0, "-0.08"], [1 / 6, "-0.04"], [2 / 6, "0.00"], [0.5, "0.04"], [4 / 6, "0.08"], [5 / 6, "0.12"], [1, "0.16"]];
const SMALL = ["-0.005", "-0.003", "-0.001", "0.001", "0.003", "0.005"];

function Dashboard() {
  const pre = ["final_training_ops/Wx_plus_b/pre_activations"];
  const bias = ["final_training_ops/biases/summaries/", "histogram"];
  const weights = ["final_training_ops/weights/summaries/", "histogram"];
  return (
    <div className="flex min-w-0 flex-1">
      <div className="flex w-[1466px] shrink-0 flex-col overflow-hidden">
        <div className="-mt-px flex shrink-0 flex-col">
          <CategoryHeader name="activations" count={2} />
          <div className="mx-px mb-[2px] flex h-[300px] border border-t-0 border-[#d9d9d9] bg-white pl-[21px] pt-[22px]">
            <Card title={["activations"]} run="train" ridges={activationsTrain} top={259} base={[344.5, 421.5]} height={225} ticks={10} labels={UNIT} iconY={456.5} />
            <Card title={["activations"]} run="validation" ridges={activationsVal} top={259} base={[344.5, 421.5]} height={225} ticks={10} labels={UNIT} iconY={456.5} />
          </div>
        </div>
        <CategoryHeader name="final_training_ops" count={6} />
        <div className="mx-px flex h-[560px] shrink-0 flex-col border-x border-[#d9d9d9] bg-white pl-[21px] pt-[22px]">
          <div className="flex h-[267px] shrink-0">
            <Card title={pre} run="train" ridges={preActTrain} top={601} base={[686.5, 764.5]} height={226} ticks={8} labels={[[0, "-6"], [0.25, "-2"], [0.5, "2"], [0.75, "6"], [1, "10"]]} iconY={799} />
            <Card title={pre} run="validation" ridges={preActVal} top={601} base={[686.5, 764.5]} height={226} ticks={13} labels={["-5", "-3", "-1", "1", "3", "5", "7"].map((s, i) => [(i * 2) / 13, s] as [number, string])} iconY={799} />
            <Card title={bias} run="train" ridges={biasTrain} top={619} base={[700.5, 771.5]} height={208} ticks={11} labels={SMALL.map((s, i) => [(i * 2) / 11, s] as [number, string])} iconY={799} />
          </div>
          <div className="flex shrink-0">
            <Card title={bias} run="validation" ridges={biasVal} top={886} base={[967.5, 1039]} height={200} ticks={10} labels={SMALL.map((s, i) => [i / 5, s] as [number, string])} iconY={1066} />
            <Card title={weights} run="train" ridges={weightsTrain} top={886} base={[967.5, 1039]} height={200} ticks={12} labels={WEIGHT} iconY={1066} />
            <Card title={weights} run="validation" ridges={weightsVal} top={886} base={[967.5, 1039]} height={200} ticks={12} labels={WEIGHT} iconY={1066} />
          </div>
        </div>
      </div>
      <div className="ml-auto w-[5px] pt-[23px]">
        <div className="h-[838px] rounded-l-[2px] bg-[#f28d6b]" />
      </div>
    </div>
  );
}

export default function App() {
  return (
    <div className="flex h-[1080px] w-[1920px] flex-col overflow-hidden bg-[#f5f5f5] font-['Roboto',sans-serif]">
      <TitleBar />
      <div className="flex min-h-0 flex-1">
        <Launcher />
        <div className="flex min-w-0 flex-1 flex-col">
          <TabStrip />
          <NavBar />
          <Toolbar />
          <div className="flex min-h-0 flex-1">
            <Sidebar />
            <Dashboard />
          </div>
        </div>
      </div>
    </div>
  );
}
